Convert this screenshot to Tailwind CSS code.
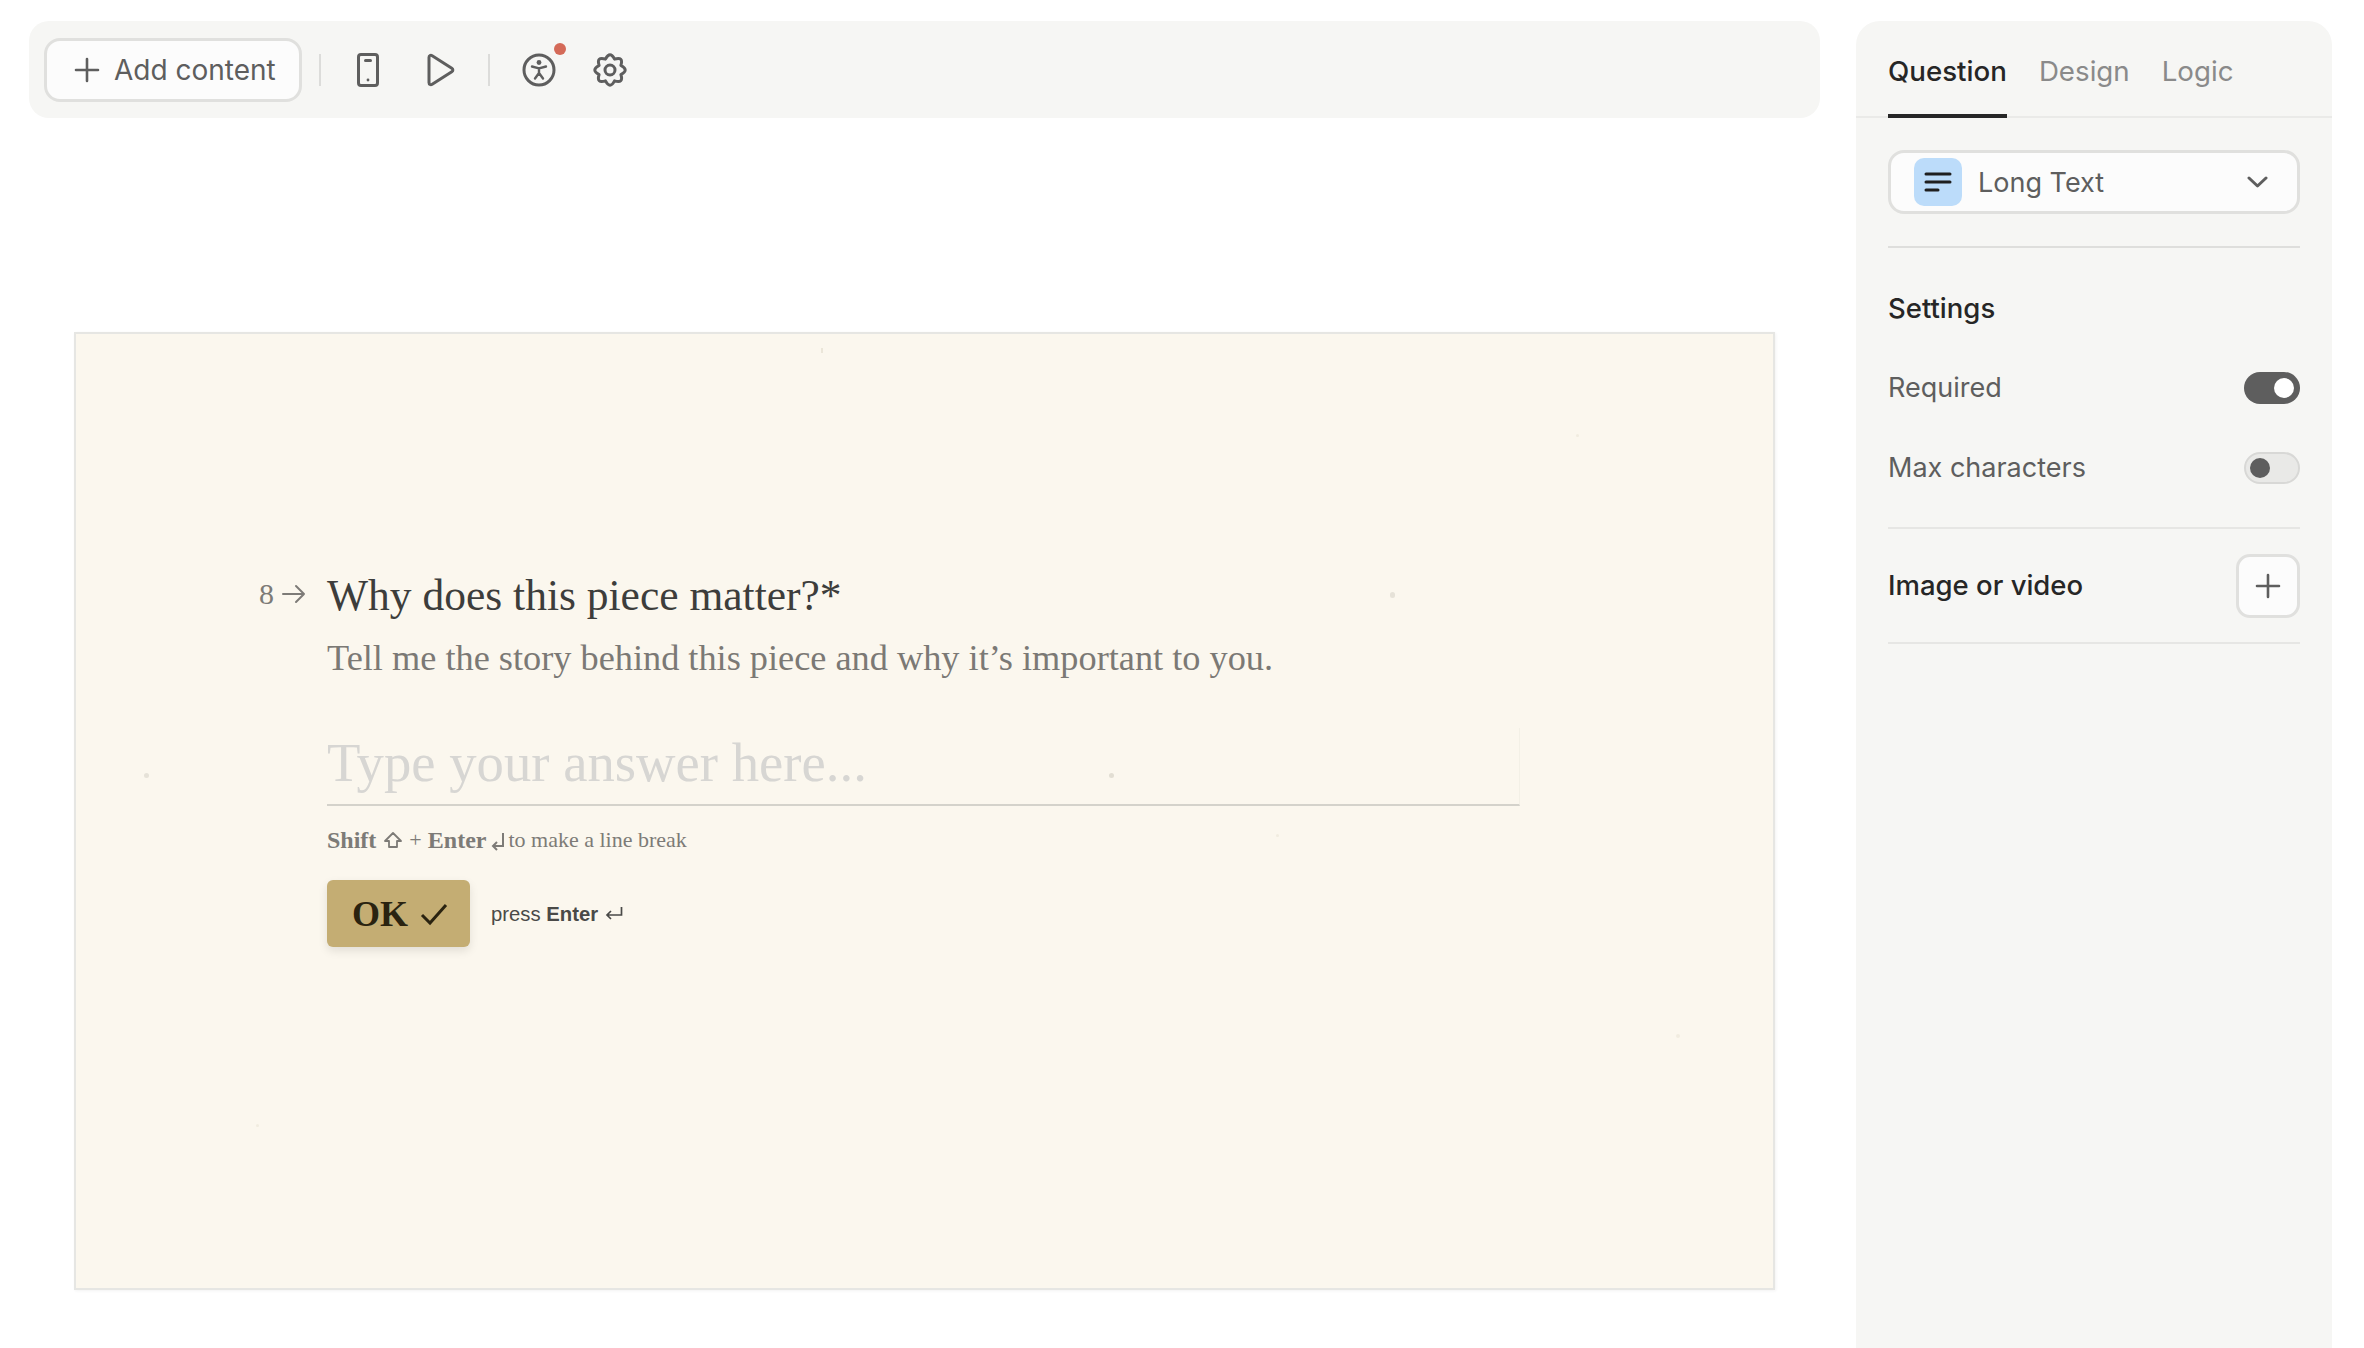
<!DOCTYPE html>
<html lang="en">
<head>
  <meta charset="UTF-8" />
  <title>Form editor</title>
  <script src="https://cdn.jsdelivr.net/npm/@tailwindcss/browser@4"></script>
</head>
<body class="h-screen overflow-hidden bg-white font-['Inter',sans-serif] text-[#5e5e5e]">

<div class="flex h-full gap-[36px] pl-[29px] pt-[21px]">

  <!-- left: toolbar + form preview -->
  <div class="w-[1791px] shrink-0">
    <div class="flex h-[97px] items-center rounded-[20px] bg-[#f6f6f4] pl-[15px]">
      <button class="flex h-[64px] w-[258px] items-center gap-[14px] rounded-[16px] border-[3px] border-[#e0e0de] bg-[#fcfcfc] pl-[27px] text-[28px] leading-none">
        <svg class="h-[26px] w-[26px]" viewBox="0 0 26 26" fill="none" stroke="#5e5e5e" stroke-width="2.6" stroke-linecap="round"><path d="M13 2v22M2 13h22"/></svg>
        <span>Add content</span>
      </button>
      <div class="ml-[17px] h-[32px] w-[2px] bg-[#dcdcda]"></div>
      <svg class="ml-[36px] h-[34px] w-[22px]" viewBox="0 0 22 34" fill="none" stroke="#5e5e5e" stroke-width="3" stroke-linejoin="round"><rect x="1.5" y="1.5" width="19" height="31" rx="2.5"/><path d="M8.5 7.5h5" stroke-linecap="round"/><circle cx="11" cy="27" r="1.4" fill="#5e5e5e" stroke="none"/></svg>
      <svg class="ml-[48px] h-[34px] w-[28px]" viewBox="0 0 28 34" fill="none" stroke="#5e5e5e" stroke-width="3" stroke-linejoin="round"><path d="M2 4.5c0-2 1.6-2.8 3.2-1.8l19.6 12.6c1.4.9 1.4 2.5 0 3.4L5.200 31.300C3.600 32.300 2 31.500 2 29.500z"/></svg>
      <div class="ml-[33px] h-[32px] w-[2px] bg-[#dcdcda]"></div>
      <div class="relative ml-[32px] h-[34px] w-[34px]">
        <svg class="h-[34px] w-[34px]" viewBox="0 0 34 34" fill="none" stroke="#5e5e5e" stroke-width="3" stroke-linecap="round" stroke-linejoin="round"><circle cx="17" cy="17" r="15"/><circle cx="17" cy="9.500" r="2.400" fill="#5e5e5e" stroke="none"/><path d="M10 13.500l7 1.800 7-1.800M17 15.300v4.700M17 20l-4 5.500M17 20l4 5.500" stroke-width="2.400"/></svg>
        <span class="absolute -right-[10px] -top-[10px] h-[12px] w-[12px] rounded-full bg-[#d46a58]"></span>
      </div>
      <svg class="ml-[37px] h-[34px] w-[34px] overflow-visible" viewBox="0 0 34 34" fill="none" stroke="#5e5e5e" stroke-width="3" stroke-linejoin="round"><path d="M27.900 12.480Q36.500 17 27.900 21.520Q30.790 30.790 21.520 27.900Q17 36.500 12.480 27.900Q3.210 30.790 6.100 21.520Q-2.500 17 6.100 12.480Q3.210 3.210 12.480 6.100Q17-2.500 21.520 6.100Q30.790 3.210 27.900 12.480Z"/><circle cx="17" cy="17" r="5"/></svg>
    </div>

    <!-- preview card -->
    <div class="relative ml-[45px] mt-[214px] h-[958px] w-[1701px] border-2 border-[#e6e6e3] bg-[#fbf7ee] pl-[183px] pt-[234px] font-['Liberation_Serif',serif] shadow-[1px_1px_3px_rgba(0,0,0,0.05)]">
      <span class="absolute left-[745px] top-[14px] h-[5px] w-[2px] bg-[#ebe6d9]"></span>
      <span class="absolute left-[1314px] top-[258px] h-[6px] w-[5px] rounded-full bg-[#e6e2d8]"></span>
      <span class="absolute left-[68px] top-[439px] h-[5px] w-[5px] rounded-full bg-[#e6e2d8]"></span>
      <span class="absolute left-[1033px] top-[439px] h-[5px] w-[5px] rounded-full bg-[#e2ded3]"></span>
      <span class="absolute left-[180px] top-[790px] h-[3px] w-[3px] rounded-full bg-[#f1ece0]"></span>
      <span class="absolute left-[1500px] top-[100px] h-[3px] w-[3px] rounded-full bg-[#f1ece0]"></span>
      <span class="absolute left-[1600px] top-[700px] h-[4px] w-[4px] rounded-full bg-[#f1ece0]"></span>
      <span class="absolute left-[1200px] top-[500px] h-[3px] w-[3px] rounded-full bg-[#f1ece0]"></span>

      <div class="flex items-center">
        <div class="flex w-[68px] shrink-0 items-center text-[30px] leading-none text-[#7d7b77]">
          <span>8</span>
          <svg class="ml-[8px] h-[22px] w-[24px]" viewBox="0 0 24 22" fill="none" stroke="#7d7b77" stroke-width="2" stroke-linecap="round" stroke-linejoin="round"><path d="M1 11h21M14 3l8 8-8 8"/></svg>
        </div>
        <h1 class="pt-[2px] text-[43.5px] leading-[50px] text-[#3d3d3b]">Why does this piece matter?*</h1>
      </div>

      <div class="ml-[68px] w-[1193px]">
        <p class="mt-[18px] text-[36.3px] leading-[40px] text-[#7b7975]">Tell me the story behind this piece and why it’s important to you.</p>
        <div class="mt-[50px] h-[78px] border-b-2 border-r border-[#d4d2cb] border-r-[#f3f0e6] text-[54.7px] leading-[70px] text-[#d7d6d3]">Type your answer here...</div>
        <p class="mt-[22px] flex items-center text-[22px] leading-[24px] text-[#7d7b77]">
          <b class="text-[24px]">Shift</b>
          <svg class="ml-[7px] h-[18px] w-[20px]" viewBox="0 0 20 18" fill="none" stroke="#7d7b77" stroke-width="1.800" stroke-linejoin="round"><path d="M10 2l8 8h-4v6H6v-6H2z"/></svg>
          <span class="ml-[6px]">+</span>
          <b class="ml-[6px] text-[24px]">Enter</b>
          <svg class="ml-[5px] mt-[3px] h-[20px] w-[14px]" viewBox="0 0 14 20" fill="none" stroke="#7d7b77" stroke-width="2"><path d="M12 1v13H3M6 10l-4 4 4 4"/></svg>
          <span class="ml-[3px]">to make a line break</span>
        </p>
        <div class="mt-[28px] flex items-center">
          <button class="flex h-[67px] w-[143px] items-center rounded-[6px] bg-[#c4ad73] pl-[25px] text-[36px] font-bold leading-none text-[#2a2310] shadow-[0_4px_10px_rgba(0,0,0,0.1)]">
            <span>OK</span>
            <svg class="ml-[12px] h-[24px] w-[28px]" viewBox="0 0 28 24" fill="none" stroke="#2a2310" stroke-width="3"><path d="M2 13l8 8L26 3"/></svg>
          </button>
          <span class="ml-[21px] mt-[2px] font-['Liberation_Sans',sans-serif] text-[20.3px] text-[#4a4a48]">press <b>Enter</b></span>
          <svg class="ml-[7px] h-[16px] w-[18px]" viewBox="0 0 18 16" fill="none" stroke="#4a4a48" stroke-width="1.700"><path d="M16.500 1v8H2M6 5L2 9l4 4"/></svg>
        </div>
      </div>
    </div>
  </div>

  <!-- right: question settings -->
  <aside class="h-full w-[476px] shrink-0 rounded-t-[24px] bg-[#f6f6f4]">
    <div class="flex h-[97px] gap-[32px] border-b-2 border-[#eaeae8] px-[32px] text-[27.7px]">
      <div class="-mb-[2px] border-b-[4px] border-[#262626] pt-[29px] font-[450] leading-[42px] text-[#262626]">Question</div>
      <div class="pt-[29px] leading-[42px] text-[#8a8a8a]">Design</div>
      <div class="pt-[29px] leading-[42px] text-[#8a8a8a]">Logic</div>
    </div>
    <div class="px-[32px]">
      <div class="mt-[32px] flex h-[64px] items-center rounded-[16px] border-[3px] border-[#e0e0de] bg-[#fcfcfc] pl-[23px] pr-[29px] text-[27px]">
        <div class="flex h-[48px] w-[48px] items-center justify-center rounded-[10px] bg-[#bcdcfa]">
          <svg class="h-[20px] w-[28px]" viewBox="0 0 28 20" fill="none" stroke="#1f1f1f" stroke-width="3" stroke-linecap="round"><path d="M2 2h24M2 10h24M2 18h12"/></svg>
        </div>
        <span class="ml-[16px] mt-[2px]">Long Text</span>
        <svg class="ml-auto h-[12px] w-[21px]" viewBox="0 0 21 12" fill="none" stroke="#5e5e5e" stroke-width="3" stroke-linecap="round" stroke-linejoin="round"><path d="M2 2l8.500 8L19 2"/></svg>
      </div>
      <div class="mt-[32px] h-[2px] bg-[#dededc]"></div>

      <div class="mt-[42px] text-[27.5px] font-[450] leading-[36px] text-[#262626]">Settings</div>
      <div class="mt-[44px] flex h-[36px] items-center justify-between text-[27px]">
        <span>Required</span>
        <span class="flex h-[32px] w-[56px] items-center justify-end rounded-full bg-[#5e5e5e] pr-[6px]"><span class="h-[20px] w-[20px] rounded-full bg-white"></span></span>
      </div>
      <div class="mt-[44px] flex h-[36px] items-center justify-between text-[27px]">
        <span>Max characters</span>
        <span class="flex h-[32px] w-[56px] items-center rounded-full border-2 border-[#d8d8d6] bg-[#e9e9e7] pl-[4px]"><span class="h-[20px] w-[20px] rounded-full bg-[#5e5e5e]"></span></span>
      </div>
      <div class="mt-[41px] h-[2px] bg-[#e6e6e4]"></div>

      <div class="mt-[25px] flex items-center justify-between text-[27.5px] font-[450] text-[#262626]">
        <span>Image or video</span>
        <button class="flex h-[64px] w-[64px] items-center justify-center rounded-[14px] border-[3px] border-[#e0e0de] bg-[#fcfcfc]">
          <svg class="h-[26px] w-[26px]" viewBox="0 0 26 26" fill="none" stroke="#5e5e5e" stroke-width="2.600" stroke-linecap="round"><path d="M13 2v22M2 13h22"/></svg>
        </button>
      </div>
      <div class="mt-[24px] h-[2px] bg-[#e6e6e4]"></div>
    </div>
  </aside>

</div>

</body>
</html>
